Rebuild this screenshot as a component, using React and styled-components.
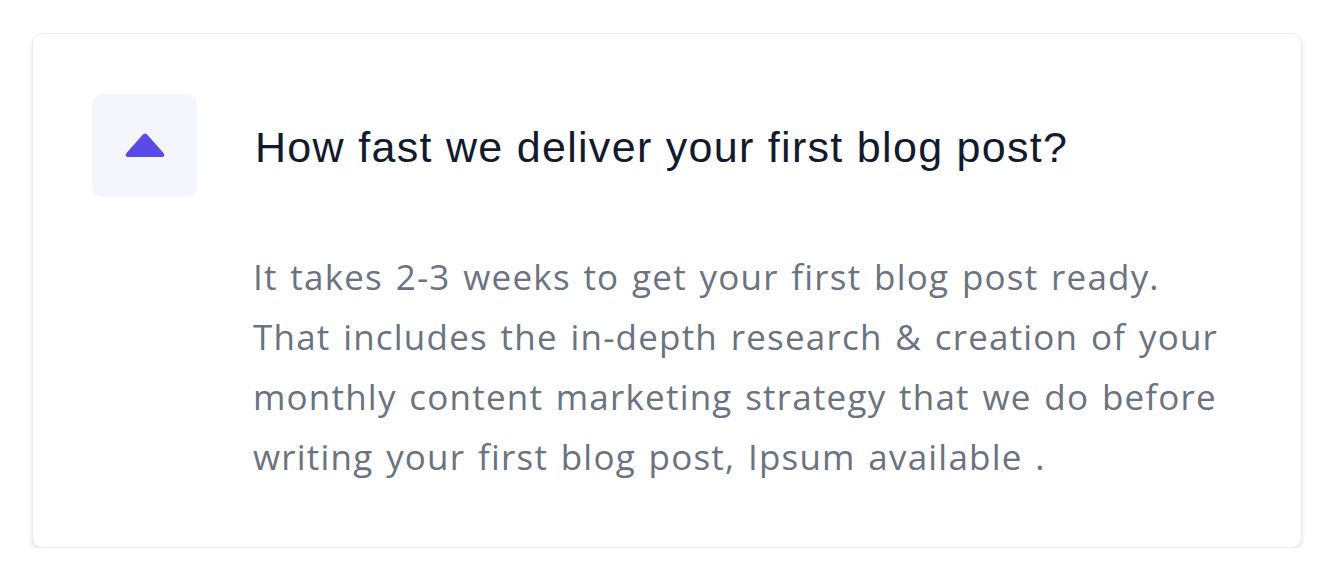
import React from 'react';
import styled, { createGlobalStyle } from 'styled-components';

const GlobalStyle = createGlobalStyle`
  body {
    margin: 0;
    background: #ffffff;
    font-family: "Liberation Sans", Arial, sans-serif;
  }
`;

const Page = styled.div`
  padding: 33px 32px 0 32px;
`;

const Card = styled.div`
  display: flex;
  gap: 58px;
  background: #ffffff;
  border: 1.5px solid #ededed;
  border-radius: 10px;
  box-shadow: 0 3px 5px rgba(0, 0, 0, 0.11);
  padding: 60px 60px 60px 59px;
`;

const Toggle = styled.button`
  flex: none;
  width: 105px;
  height: 103px;
  border: none;
  border-radius: 10px;
  background: #f5f6fd;
  display: flex;
  align-items: center;
  justify-content: center;
  padding: 0;
  cursor: pointer;
`;

const Body = styled.div`
  display: flex;
  flex-direction: column;
`;

const Question = styled.h3`
  margin: 0;
  height: 103px;
  padding-top: 4px;
  box-sizing: border-box;
  display: flex;
  align-items: center;
  font-family: "Liberation Sans", Arial, sans-serif;
  font-weight: 400;
  font-size: 43px;
  color: #141a2e;
  letter-spacing: 1.3px;
`;

const Answer = styled.p`
  margin: 50px 0 0 -2px;
  font-family: "Open Sans", Lato, sans-serif;
  font-size: 35px;
  line-height: 60px;
  color: #6b7280;
  letter-spacing: 1.2px;
  word-spacing: 2.4px;
`;

function Triangle() {
  return (
    <svg width="44" height="28" viewBox="0 0 44 28">
      <path
        d="M19.2 3.2 Q22 0 24.8 3.2 L40.5 21 Q43 25 38.5 25 L5.5 25 Q1 25 3.5 21 Z"
        fill="#5a4be7"
      />
    </svg>
  );
}

export default function App() {
  return (
    <Page>
      <GlobalStyle />
      <Card>
        <Toggle aria-label="collapse">
          <Triangle />
        </Toggle>
        <Body>
          <Question>How fast we deliver your first blog post?</Question>
          <Answer>
            It takes 2-3 weeks to get your first blog post ready.<br />
            That includes the in-depth research &amp; creation of your<br />
            monthly content marketing strategy that we do before<br />
            writing your first blog post, Ipsum available .
          </Answer>
        </Body>
      </Card>
    </Page>
  );
}
